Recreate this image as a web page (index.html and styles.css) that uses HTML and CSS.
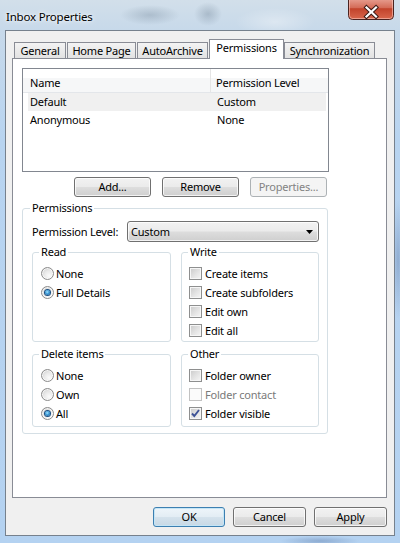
FILE: index.html
```html
<!DOCTYPE html>
<html>
<head>
<meta charset="utf-8">
<title>Inbox Properties</title>
<link rel="stylesheet" href="styles.css">
</head>
<body>
<div class="window">
  <div class="titlebar">
    <span class="title">Inbox Properties</span>
    <div class="close">
      <svg width="46" height="20" viewBox="0 0 46 20">
        <defs>
          <linearGradient id="cg" x1="0" y1="0" x2="0" y2="1">
            <stop offset="0" stop-color="#e9a497"/>
            <stop offset="0.45" stop-color="#d46c58"/>
            <stop offset="0.5" stop-color="#c2432b"/>
            <stop offset="1" stop-color="#d9684d"/>
          </linearGradient>
        </defs>
        <path d="M0.5 -2 H45.5 V15.5 Q45.5 19.5 41.5 19.5 H4.5 Q0.5 19.5 0.5 15.5 Z" fill="url(#cg)" stroke="#4a2320"/>
        <path d="M1.5 -2 H44.5 V15.5 Q44.5 18.5 41.5 18.5 H4.5 Q1.5 18.5 1.5 15.5 Z" fill="none" stroke="rgba(255,210,200,0.55)"/>
        <path d="M18.5 7.5 L28 16.5 M28 7.5 L18.5 16.5" stroke="#3a1a16" stroke-width="4.2" stroke-linecap="square"/>
        <path d="M18.5 7.5 L28 16.5 M28 7.5 L18.5 16.5" stroke="#ffffff" stroke-width="2.2" stroke-linecap="square"/>
      </svg>
    </div>
  </div>
  <div class="client">
    <div class="tabs">
      <div class="tab t-general">General</div>
      <div class="tab t-home">Home Page</div>
      <div class="tab t-auto">AutoArchive</div>
      <div class="tab t-perm active">Permissions</div>
      <div class="tab t-sync">Synchronization</div>
    </div>
    <div class="panel">
      <div class="list">
        <div class="lhead">
          <div class="hc1">Name</div>
          <div class="hc2">Permission Level</div>
        </div>
        <div class="lrow selected">
          <div class="rc1">Default</div>
          <div class="rc2">Custom</div>
        </div>
        <div class="lrow">
          <div class="rc1">Anonymous</div>
          <div class="rc2">None</div>
        </div>
      </div>
      <div class="listbtns">
        <div class="btn">Add...</div>
        <div class="btn">Remove</div>
        <div class="btn disabled">Properties...</div>
      </div>
      <fieldset class="group perms">
        <legend>Permissions</legend>
        <div class="levelrow">
          <span>Permission Level:</span>
          <div class="combo">
            <span>Custom</span>
            <svg class="arrow" width="7" height="4" viewBox="0 0 7 4"><polygon points="0,0 7,0 3.5,4" fill="#000"/></svg>
          </div>
        </div>
        <div class="grid">
          <fieldset class="sub top">
            <legend>Read</legend>
            <div class="opt"><span class="radio"></span><span>None</span></div>
            <div class="opt"><span class="radio on"></span><span>Full Details</span></div>
          </fieldset>
          <fieldset class="sub top">
            <legend>Write</legend>
            <div class="opt"><span class="chk"></span><span>Create items</span></div>
            <div class="opt"><span class="chk"></span><span>Create subfolders</span></div>
            <div class="opt"><span class="chk"></span><span>Edit own</span></div>
            <div class="opt"><span class="chk"></span><span>Edit all</span></div>
          </fieldset>
          <fieldset class="sub bottom">
            <legend>Delete items</legend>
            <div class="opt"><span class="radio"></span><span>None</span></div>
            <div class="opt"><span class="radio"></span><span>Own</span></div>
            <div class="opt"><span class="radio on"></span><span>All</span></div>
          </fieldset>
          <fieldset class="sub bottom">
            <legend>Other</legend>
            <div class="opt"><span class="chk"></span><span>Folder owner</span></div>
            <div class="opt dim"><span class="chk disabled"></span><span>Folder contact</span></div>
            <div class="opt"><span class="chk"><svg width="11" height="11" viewBox="0 0 11 11"><path d="M2 5.5 L4.3 8 L9 2" fill="none" stroke="#3d5296" stroke-width="1.9"/></svg></span><span>Folder visible</span></div>
          </fieldset>
        </div>
      </fieldset>
    </div>
    <div class="footer">
      <div class="btn default w72">OK</div>
      <div class="btn w73">Cancel</div>
      <div class="btn w73">Apply</div>
    </div>
  </div>
</div>
</body>
</html>
```

FILE: styles.css
```css
html, body {
  margin: 0;
  padding: 0;
}

body {
  width: 400px;
  height: 543px;
  overflow: hidden;
  font-family: "Noto Sans", "DejaVu Sans", sans-serif;
  font-size: 11px;
  letter-spacing: -0.2px;
  color: #000;
  background:
    radial-gradient(ellipse 30px 10px at 150px 15px, rgba(90,110,130,0.28), rgba(90,110,130,0) 100%),
    radial-gradient(ellipse 14px 12px at 208px 14px, rgba(90,110,130,0.30), rgba(90,110,130,0) 100%),
    radial-gradient(ellipse 40px 14px at 275px 22px, rgba(255,255,255,0.35), rgba(255,255,255,0) 100%),
    radial-gradient(ellipse 6px 60px at 398px 260px, rgba(70,100,150,0.35), rgba(70,100,150,0) 100%),
    radial-gradient(ellipse 40px 5px at 320px 541px, rgba(70,100,150,0.35), rgba(70,100,150,0) 100%),
    linear-gradient(to bottom, #d2dfea 0, #c7d9ea 30px, #b8d4f0 140px, #b4d2f1 100%);
}

.window {
  width: 400px;
  height: 543px;
  display: flex;
  flex-direction: column;
}

.titlebar {
  height: 30px;
  display: flex;
  justify-content: space-between;
  align-items: flex-start;
  flex: none;
}

.title {
  margin: 9px 0 0 6px;
  line-height: 15px;
  font-size: 11.5px;
  text-shadow: 0 0 6px rgba(255,255,255,0.95), 0 0 3px rgba(255,255,255,0.9);
}

.close {
  width: 46px;
  height: 20px;
  margin-right: 6px;
}

.close svg {
  display: block;
}

.client {
  box-sizing: border-box;
  height: 506px;
  margin: 0 5px 0 5px;
  border: 1px solid #76818d;
  background: #f0f0f0;
  padding: 0 7px 0 6px;
  display: flex;
  flex-direction: column;
}

/* Tabs */
.tabs {
  display: flex;
  align-items: flex-end;
  height: 19px;
  margin-top: 8px;
  padding-left: 2px;
  flex: none;
}

.tab {
  box-sizing: border-box;
  height: 16px;
  border: 1px solid #898c95;
  border-bottom: none;
  background: linear-gradient(#f3f3f3, #e2e2e2);
  text-align: center;
  line-height: 15px;
  margin-right: 1px;
  white-space: nowrap;
}

.t-general { width: 52px; }
.t-home { width: 69px; }
.t-auto { width: 71px; }
.t-perm { width: 75px; margin-right: 0; }
.t-sync { width: 91px; }

.tab.active {
  height: 20px;
  margin-bottom: -1px;
  background: #fff;
  position: relative;
  z-index: 1;
}

/* Panel */
.panel {
  box-sizing: border-box;
  height: 440px;
  flex: none;
  border: 1px solid #898c95;
  background: #fff;
  padding: 9px 0 0 9px;
}

.list {
  box-sizing: border-box;
  width: 307px;
  height: 104px;
  border: 1px solid #828790;
  background: #fff;
}

.lhead {
  display: flex;
  height: 23px;
  border-bottom: 1px solid #e3e6ea;
  background: linear-gradient(#ffffff 0, #ffffff 40%, #f6f7f8 40%, #f6f7f8 100%);
}

.hc1 {
  box-sizing: border-box;
  width: 188px;
  padding: 6px 0 0 7px;
  border-right: 1px solid #e5e5e5;
  line-height: 15px;
}

.hc2 {
  padding: 6px 0 0 5px;
  line-height: 15px;
}

.lrow {
  display: flex;
  height: 18px;
  line-height: 18px;
  margin: 0 2px 0 5px;
}

.lrow.selected {
  background: #f0f0f0;
}

.rc1 {
  box-sizing: border-box;
  width: 183px;
  padding-left: 2px;
}

.rc2 {
  padding-left: 6px;
}

.listbtns {
  display: flex;
  gap: 11px;
  margin: 5px 0 0 52px;
}

/* Buttons */
.btn {
  box-sizing: border-box;
  width: 77px;
  height: 20px;
  border: 1px solid #707070;
  border-radius: 3px;
  background: linear-gradient(#f2f2f2 0, #ebebeb 48%, #dddddd 52%, #cfcfcf 100%);
  box-shadow: inset 0 0 0 1px rgba(255,255,255,0.75);
  text-align: center;
  line-height: 18px;
  white-space: nowrap;
}

.btn.disabled {
  border-color: #adb2b5;
  background: #f4f4f4;
  box-shadow: none;
  color: #838383;
}

.btn.default {
  border-color: #3c7fb1;
  background: linear-gradient(#eef5fa 0, #e3edf4 48%, #d4e2ec 52%, #c7d8e5 100%);
  box-shadow: inset 0 0 0 1px #c4e5f6;
}

.btn.w72 { width: 72px; }
.btn.w73 { width: 73px; }

/* Group boxes */
fieldset {
  margin: 0;
  min-width: 0;
}

.group legend,
.sub legend {
  padding: 0 2px;
  margin-left: -2px;
  line-height: 14px;
}

.perms {
  box-sizing: border-box;
  width: 306px;
  margin-top: 4px;
  border: 1px solid #d5dfe5;
  border-radius: 3px;
  padding: 6px 8px 6px 9px;
}

.levelrow {
  display: flex;
  align-items: center;
  height: 21px;
  margin-bottom: 3px;
}

.combo {
  box-sizing: border-box;
  width: 192px;
  height: 21px;
  margin-left: auto;
  display: flex;
  align-items: center;
  justify-content: space-between;
  padding: 0 5px 0 3px;
  border: 1px solid #707070;
  border-radius: 3px;
  background: linear-gradient(#f2f2f2 0, #ebebeb 48%, #dddddd 52%, #cfcfcf 100%);
  box-shadow: inset 0 0 0 1px rgba(255,255,255,0.75);
  line-height: 19px;
}

.combo .arrow {
  display: block;
}

.grid {
  display: grid;
  grid-template-columns: 139px 138px;
  column-gap: 10px;
  row-gap: 5px;
}

.sub {
  border: 1px solid #d5dfe5;
  border-radius: 3px;
  padding: 5px 4px 1px 8px;
}

.sub.bottom {
  padding-bottom: 3px;
}

.opt {
  display: flex;
  align-items: center;
  height: 19px;
  line-height: 15px;
  white-space: nowrap;
}

.opt.dim {
  color: #7a7a7a;
}

.radio {
  flex: none;
  box-sizing: border-box;
  width: 13px;
  height: 13px;
  margin-right: 2px;
  border-radius: 50%;
  border: 1px solid #8b8b8b;
  background: radial-gradient(circle at 65% 70%, #fbfbfb 0, #e9e9e9 45%, #c8c8c8 100%);
  box-shadow: inset 0 0 0 1px rgba(255,255,255,0.7);
}

.radio.on::after {
  content: "";
  display: block;
  width: 5px;
  height: 5px;
  margin: 3px;
  border-radius: 50%;
  background: radial-gradient(circle at 45% 40%, #a8e6ff 0, #3a9ad8 45%, #0e4a86 100%);
  box-shadow: 0 0 0 1px #1b4f82;
}

.chk {
  flex: none;
  box-sizing: border-box;
  width: 13px;
  height: 13px;
  margin: 0 3px 0 -1px;
  border: 1px solid #8e8f8f;
  background: linear-gradient(135deg, #c9c9c9 0, #e4e4e4 55%, #f6f6f6 100%);
  box-shadow: inset 0 0 0 1px #f6f6f6;
}

.chk svg {
  display: block;
}

.chk.disabled {
  border-color: #c2c2c2;
  background: #fbfbfb;
  box-shadow: none;
}

/* Footer */
.footer {
  display: flex;
  justify-content: flex-end;
  gap: 8px;
  padding: 9px 0 8px 0;
  flex: none;
}
```
